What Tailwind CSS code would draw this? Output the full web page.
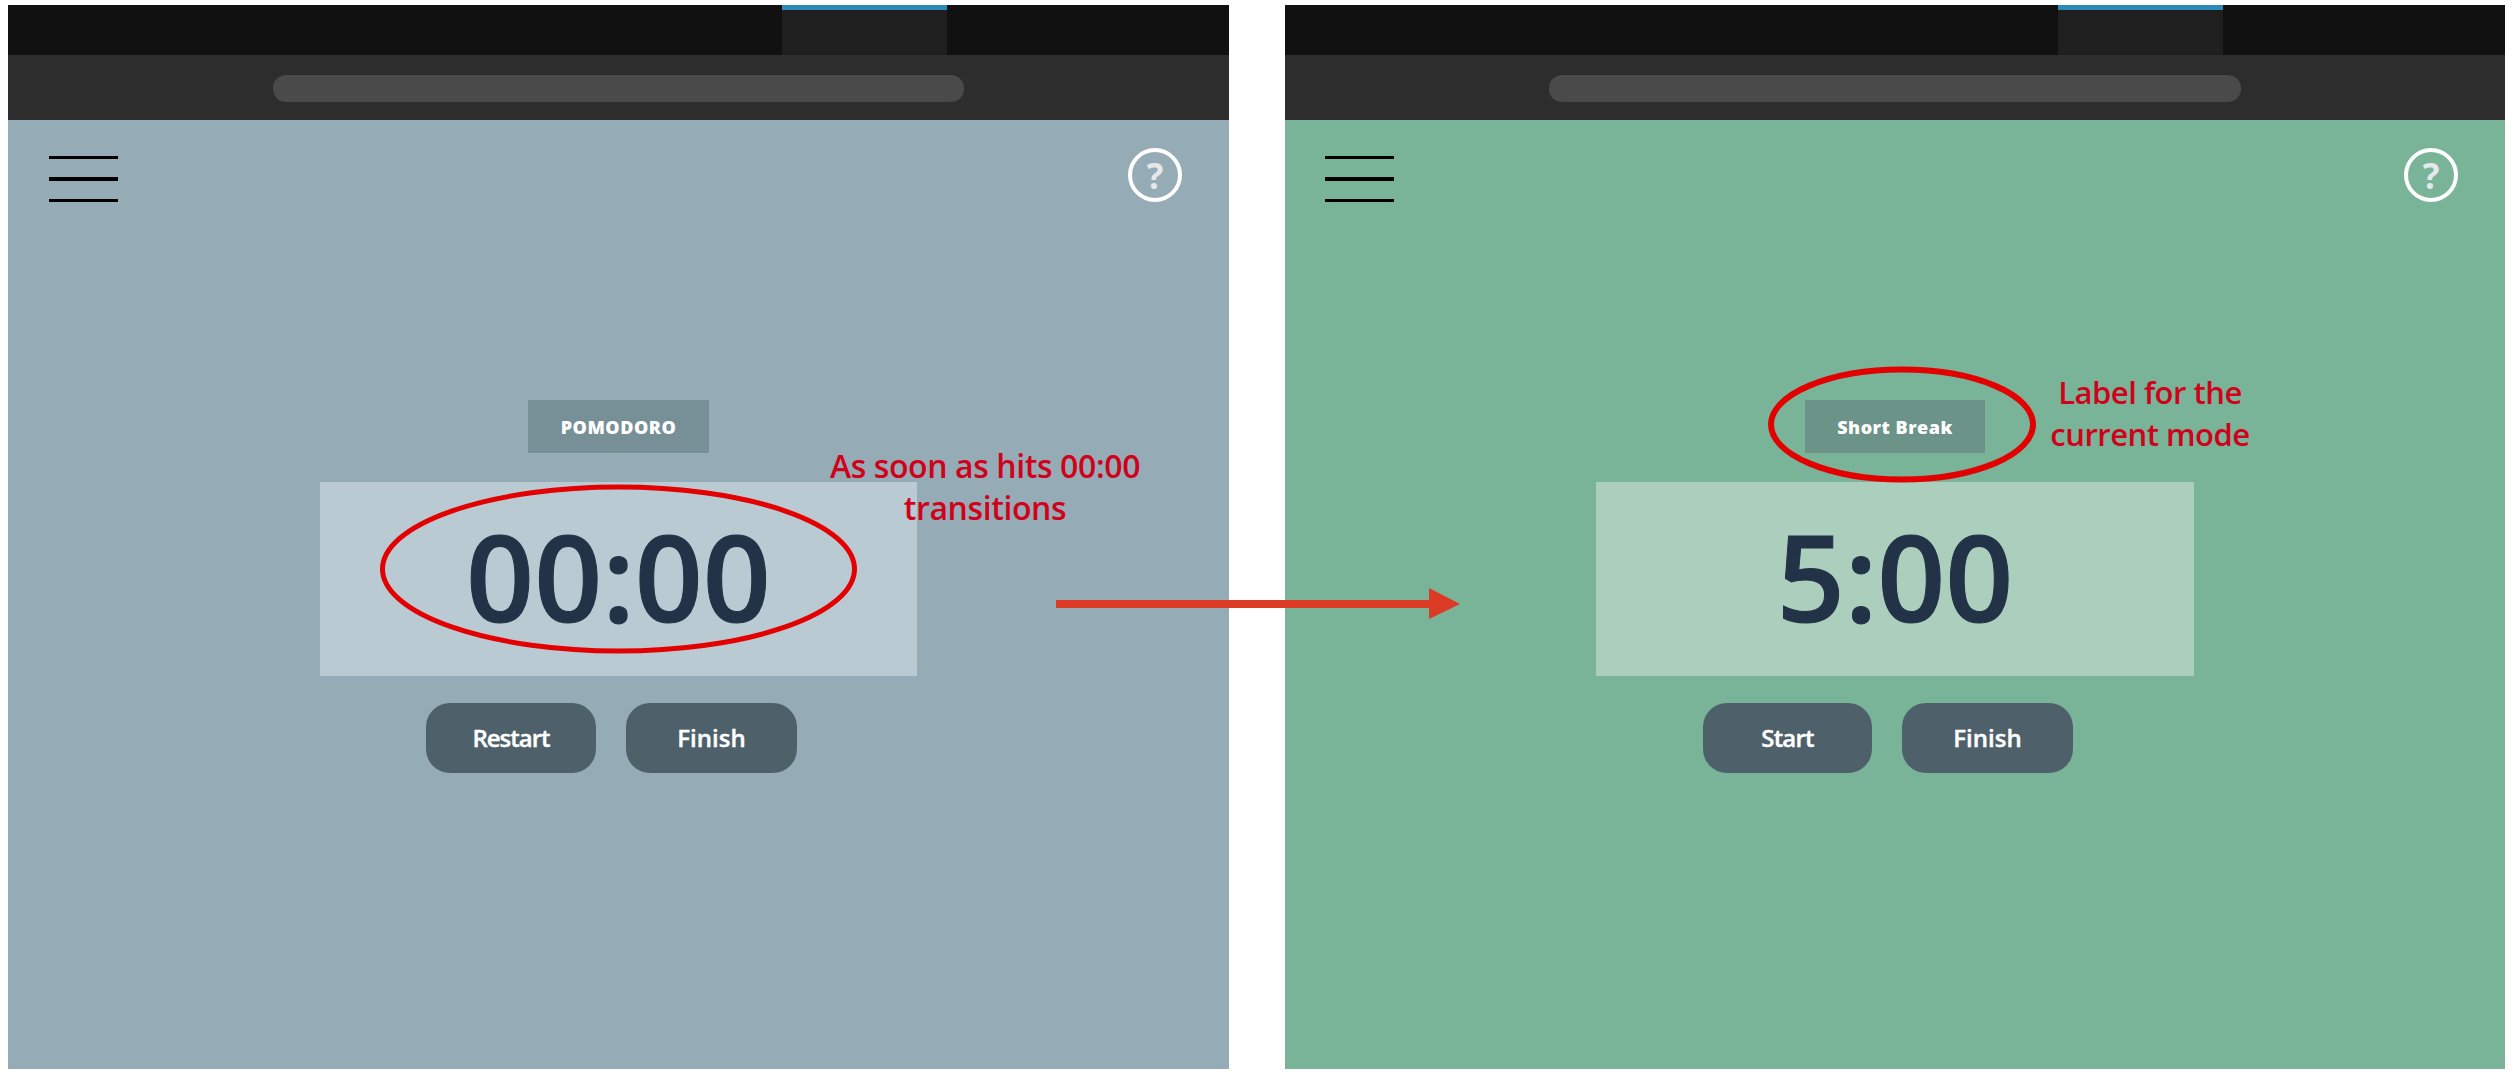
<!DOCTYPE html>
<html lang="en">
<head>
    <meta charset="UTF-8">
    <title>Pomodoro mode transition</title>
    <script src="https://cdn.jsdelivr.net/npm/@tailwindcss/browser@4"></script>
</head>
<body class="bg-white">
<div class="relative w-[2512px] h-[1078px] overflow-hidden font-['Open_Sans',sans-serif]">
    <div class="flex gap-[56px] pl-[8px] pt-[5px]">

        <!-- Pomodoro panel -->
        <section class="flex flex-col w-[1221px] h-[1064px] bg-[#95acb6]">
            <div class="h-[50px] bg-[#111111] pl-[774px]">
                <div class="w-[165px] h-full bg-[#1f1f1f] border-t-[5px] border-[#2a8ab8]"></div>
            </div>
            <div class="h-[65px] bg-[#2d2d2d] pt-[20px] pl-[265px]">
                <div class="w-[691px] h-[27px] rounded-[13px] bg-[#4a4a4a]"></div>
            </div>
            <div class="flex justify-between h-[82px] pt-[28px] pl-[41px] pr-[47px]">
                <div class="flex flex-col gap-[18px] w-[69px] pt-[8px]">
                    <div class="h-[4px] bg-black"></div>
                    <div class="h-[4px] bg-black"></div>
                    <div class="h-[4px] bg-black"></div>
                </div>
                <div class="flex items-center justify-center w-[54px] h-[54px] rounded-full border-[4px] border-white text-[#e4e8ea] text-[35px] font-bold leading-none">?</div>
            </div>
            <div class="flex flex-col items-center pt-[198px]">
                <div class="flex items-center justify-center w-[181px] h-[53px] pt-[2px] bg-[#778f97] text-white text-[18px] font-extrabold tracking-[0.5px]">POMODORO</div>
                <div class="flex items-center justify-center w-[597px] h-[194px] mt-[29px] pb-[5px] bg-[#bacad2] text-[#233347] text-[119px] font-semibold leading-none [-webkit-text-stroke:1px_#233347]">00:00</div>
                <div class="flex gap-[30px] mt-[27px] mr-[14px]">
                    <button class="w-[170px] h-[70px] rounded-[24px] bg-[#4e616b] text-white text-[24px] font-semibold tracking-[-1px] [-webkit-text-stroke:0.4px_white]">Restart</button>
                    <button class="w-[171px] h-[70px] rounded-[24px] bg-[#4e616b] text-white text-[24px] font-semibold [-webkit-text-stroke:0.4px_white]">Finish</button>
                </div>
            </div>
        </section>

        <!-- Short break panel -->
        <section class="flex flex-col w-[1220px] h-[1064px] bg-[#7ab498]">
            <div class="h-[50px] bg-[#111111] pl-[773px]">
                <div class="w-[165px] h-full bg-[#1f1f1f] border-t-[5px] border-[#2a8ab8]"></div>
            </div>
            <div class="h-[65px] bg-[#2d2d2d] pt-[20px] pl-[264px]">
                <div class="w-[692px] h-[27px] rounded-[13px] bg-[#4a4a4a]"></div>
            </div>
            <div class="flex justify-between h-[82px] pt-[28px] pl-[40px] pr-[47px]">
                <div class="flex flex-col gap-[18px] w-[69px] pt-[8px]">
                    <div class="h-[4px] bg-black"></div>
                    <div class="h-[4px] bg-black"></div>
                    <div class="h-[4px] bg-black"></div>
                </div>
                <div class="flex items-center justify-center w-[54px] h-[54px] rounded-full border-[4px] border-white text-[#e4e8ea] text-[35px] font-bold leading-none">?</div>
            </div>
            <div class="flex flex-col items-center pt-[198px]">
                <div class="flex items-center justify-center w-[180px] h-[53px] pt-[2px] bg-[#6c9388] text-white text-[18px] font-extrabold tracking-[0.5px]">Short Break</div>
                <div class="flex items-center justify-center w-[598px] h-[194px] mt-[29px] pb-[5px] bg-[#accebc] text-[#233347] text-[119px] font-semibold leading-none [-webkit-text-stroke:1px_#233347]">5:00</div>
                <div class="flex gap-[30px] mt-[27px] mr-[14px]">
                    <button class="w-[169px] h-[70px] rounded-[24px] bg-[#4e616b] text-white text-[24px] font-semibold tracking-[-0.8px] [-webkit-text-stroke:0.4px_white]">Start</button>
                    <button class="w-[171px] h-[70px] rounded-[24px] bg-[#4e616b] text-white text-[24px] font-semibold [-webkit-text-stroke:0.4px_white]">Finish</button>
                </div>
            </div>
        </section>
    </div>

    <!-- Annotations drawn over the panels -->
    <svg class="absolute left-0 top-0 pointer-events-none" width="2512" height="1078" fill="none">
        <ellipse cx="618.5" cy="569" rx="236" ry="82" stroke="#e30000" stroke-width="5"/>
        <ellipse cx="1902" cy="424.5" rx="131" ry="55" stroke="#e30000" stroke-width="6"/>
        <rect x="1056" y="600" width="374" height="8" fill="#db3a25"/>
        <polygon points="1429,588 1460,604 1429,619" fill="#db3a25"/>
    </svg>
    <div class="absolute left-[785px] top-[445px] w-[400px] text-center text-[#d0021b] text-[32px] font-semibold tracking-[-0.4px] leading-[42px]">As soon as hits 00:00<br>transitions</div>
    <div class="absolute left-[2000px] top-[371px] w-[300px] text-center text-[#d0021b] text-[31px] font-semibold tracking-[-0.5px] leading-[42px]">Label for the<br>current mode</div>
</div>
</body>
</html>
